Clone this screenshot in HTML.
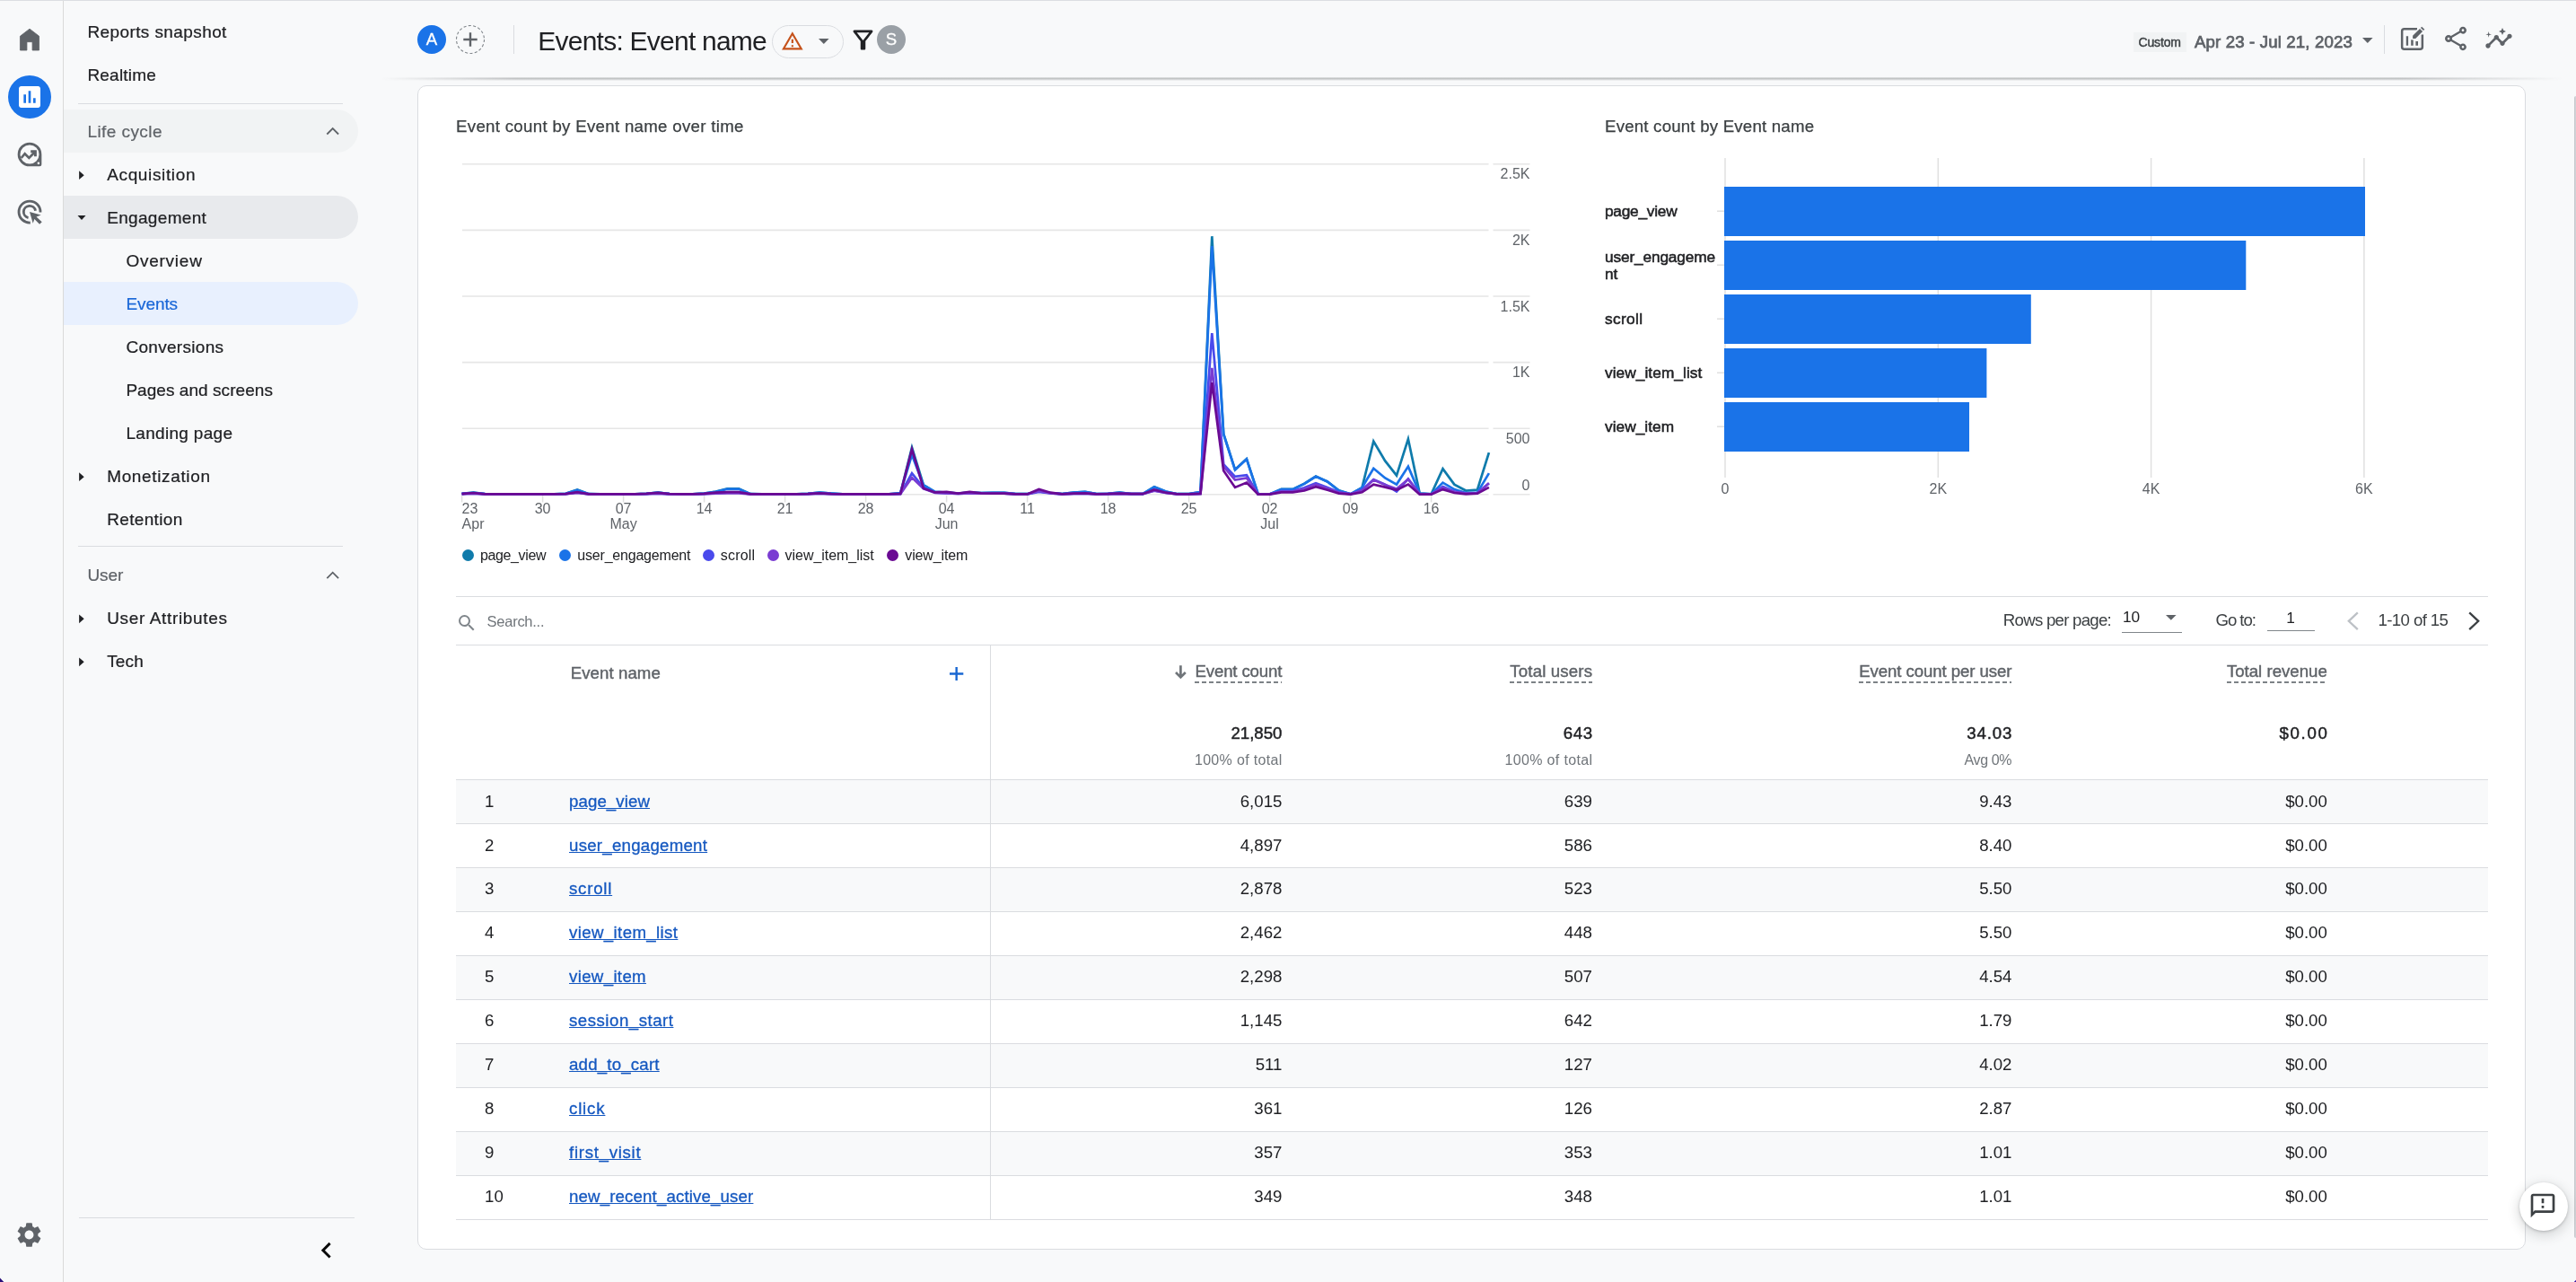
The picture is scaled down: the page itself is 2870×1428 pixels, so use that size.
<!DOCTYPE html>
<html lang="en"><head><meta charset="utf-8"><title>Events: Event name</title>
<style>
html,body{margin:0;padding:0}
body{width:2870px;height:1428px;overflow:hidden;background:#f8f9fa;font-family:"Liberation Sans", sans-serif;position:relative;color:#202124}
div,svg{box-sizing:border-box}
svg{position:absolute;overflow:visible}
a{color:#1558c0;text-decoration:underline}
#L{position:absolute;left:0;top:0;width:2870px;height:1428px;will-change:transform;overflow:hidden}
</style></head><body><div id="L">
<div style="position:absolute;left:0px;top:0px;width:2870px;height:1px;background:#dcdee2;"></div>
<div style="position:absolute;left:69.9px;top:1px;width:1.3px;height:1428px;background:#dadada;"></div>
<svg style="left:17px;top:28px" width="32" height="32" viewBox="0 0 24 24"><path d="M12 3.1L4.1 9.2V21h5.6v-7h4.6v7h5.6V9.2z" fill="#5f6368" stroke="#5f6368" stroke-width=".6" stroke-linejoin="round"/></svg>
<div style="position:absolute;left:9px;top:84px;width:48px;height:48px;border-radius:50%;background:#1a73e8"></div>
<svg style="left:17px;top:92px" width="32" height="32" viewBox="0 0 24 24"><path d="M19 3H5c-1.1 0-2 .9-2 2v14c0 1.1.9 2 2 2h14c1.1 0 2-.9 2-2V5c0-1.1-.9-2-2-2zM9 17H7v-7h2v7zm4 0h-2V7h2v10zm4 0h-2v-4h2v4z" fill="#fff"/></svg>
<svg style="left:17.35px;top:155.9px" width="32" height="32" viewBox="0 0 24 24"><path fill-rule="evenodd" fill="#5f6368" d="M12 2A10 10 0 1 0 12 22H20.4A1.600 1.600 0 0 0 22 20.400V12A10 10 0 0 0 12 2zM12 4.100a7.900 7.900 0 1 0 0 15.800a7.900 7.900 0 1 0 0-15.800z"/><path d="M5 15l3-3.600 3.500 3.500 5.300-5.300" fill="none" stroke="#5f6368" stroke-width="2" stroke-linejoin="miter"/><path d="M12.900 8.500h5v5.200h-2.200v-3h-2.800z" fill="#5f6368"/><circle cx="19.400" cy="19.400" r=".95" fill="#fff"/></svg>
<svg style="left:17.35px;top:220.1px" width="32" height="32" viewBox="0 0 24 24" fill="none" stroke="#5f6368" stroke-width="2.100"><path d="M21 12.400A9 9 0 1 0 12.600 21"/><path d="M16.900 11A5 5 0 1 0 10.900 16.900"/><path d="M12 12L21.500 14.700L17.600 16.100L22.300 20.400L20.300 22.400L16 18L14.800 21.600z" fill="#5f6368" stroke="none"/></svg>
<svg style="left:16.400px;top:1359px" width="33" height="33" viewBox="0 0 24 24"><path fill="#5f6368" d="M19.14 12.94c.04-.3.06-.61.06-.94 0-.32-.02-.64-.07-.94l2.03-1.58c.18-.14.23-.41.12-.61l-1.92-3.32c-.12-.22-.37-.29-.59-.22l-2.39.96c-.5-.38-1.03-.7-1.62-.94l-.36-2.54c-.04-.24-.24-.41-.48-.41h-3.84c-.24 0-.43.17-.47.41l-.36 2.54c-.59.24-1.13.57-1.62.94l-2.39-.96c-.22-.08-.47 0-.59.22L2.74 8.87c-.12.21-.08.47.12.61l2.03 1.58c-.05.3-.09.63-.09.94s.02.64.07.94l-2.03 1.58c-.18.14-.23.41-.12.61l1.92 3.32c.12.22.37.29.59.22l2.39-.96c.5.38 1.03.7 1.62.94l.36 2.54c.05.24.24.41.48.41h3.84c.24 0 .44-.17.47-.41l.36-2.54c.59-.24 1.13-.56 1.62-.94l2.39.96c.22.08.47 0 .59-.22l1.92-3.32c.12-.22.07-.47-.12-.61l-2.01-1.58zM12 15.6c-1.98 0-3.6-1.62-3.6-3.6s1.62-3.6 3.6-3.6 3.6 1.62 3.6 3.6-1.62 3.6-3.6 3.6z"/></svg>
<svg style="left:0;top:1420px" width="2870" height="8" viewBox="0 0 2870 8"><path d="M0 3.500L4.300 8H0z" fill="#2a0e78"/><path d="M2870 5.800L2867.800 8H2870z" fill="#3a14a0"/></svg>
<div style="position:absolute;left:71px;top:122px;width:328px;height:48px;border-radius:0 24px 24px 0;background:#f1f3f4"></div>
<div style="position:absolute;left:71px;top:218px;width:328px;height:48px;border-radius:0 24px 24px 0;background:#e8eaed"></div>
<div style="position:absolute;left:71px;top:314px;width:328px;height:48px;border-radius:0 24px 24px 0;background:#e8f0fe"></div>
<div style="position:absolute;left:87px;top:115px;width:295px;height:1px;background:#dadce0;"></div>
<div style="position:absolute;left:87px;top:608px;width:295px;height:1px;background:#dadce0;"></div>
<div style="position:absolute;left:88px;top:1356px;width:307px;height:1px;background:#dadce0;"></div>
<div style="position:absolute;top:23.00px;line-height:25px;font-size:19px;color:#202124;white-space:nowrap;letter-spacing:0.405px;-webkit-text-stroke:0.22px #202124;left:97.40px;" class="nav">Reports snapshot</div>
<div style="position:absolute;top:71.00px;line-height:25px;font-size:19px;color:#202124;white-space:nowrap;letter-spacing:0.219px;-webkit-text-stroke:0.22px #202124;left:97.40px;" class="nav">Realtime</div>
<div style="position:absolute;top:134.00px;line-height:25px;font-size:19px;color:#5f6368;white-space:nowrap;letter-spacing:0.433px;-webkit-text-stroke:0.22px #5f6368;left:97.40px;" class="nav">Life cycle</div>
<div style="position:absolute;top:182.00px;line-height:25px;font-size:19px;color:#202124;white-space:nowrap;letter-spacing:0.642px;-webkit-text-stroke:0.22px #202124;left:119.20px;" class="nav">Acquisition</div>
<div style="position:absolute;top:230.00px;line-height:25px;font-size:19px;color:#202124;white-space:nowrap;letter-spacing:0.328px;-webkit-text-stroke:0.22px #202124;left:119.20px;" class="nav">Engagement</div>
<div style="position:absolute;top:278.00px;line-height:25px;font-size:19px;color:#202124;white-space:nowrap;letter-spacing:0.76px;-webkit-text-stroke:0.22px #202124;left:140.40px;" class="nav">Overview</div>
<div style="position:absolute;top:326.00px;line-height:25px;font-size:19px;color:#1a67d8;white-space:nowrap;letter-spacing:-0.077px;-webkit-text-stroke:0.22px #1a67d8;left:140.40px;" class="nav">Events</div>
<div style="position:absolute;top:374.00px;line-height:25px;font-size:19px;color:#202124;white-space:nowrap;letter-spacing:0.3px;-webkit-text-stroke:0.22px #202124;left:140.40px;" class="nav">Conversions</div>
<div style="position:absolute;top:422.00px;line-height:25px;font-size:19px;color:#202124;white-space:nowrap;letter-spacing:0.053px;-webkit-text-stroke:0.22px #202124;left:140.40px;" class="nav">Pages and screens</div>
<div style="position:absolute;top:470.00px;line-height:25px;font-size:19px;color:#202124;white-space:nowrap;letter-spacing:0.312px;-webkit-text-stroke:0.22px #202124;left:140.40px;" class="nav">Landing page</div>
<div style="position:absolute;top:518.00px;line-height:25px;font-size:19px;color:#202124;white-space:nowrap;letter-spacing:0.643px;-webkit-text-stroke:0.22px #202124;left:119.20px;" class="nav">Monetization</div>
<div style="position:absolute;top:566.00px;line-height:25px;font-size:19px;color:#202124;white-space:nowrap;letter-spacing:0.346px;-webkit-text-stroke:0.22px #202124;left:119.20px;" class="nav">Retention</div>
<div style="position:absolute;top:628.00px;line-height:25px;font-size:19px;color:#5f6368;white-space:nowrap;letter-spacing:-0.072px;-webkit-text-stroke:0.22px #5f6368;left:97.40px;" class="nav">User</div>
<div style="position:absolute;top:676.00px;line-height:25px;font-size:19px;color:#202124;white-space:nowrap;letter-spacing:0.65px;-webkit-text-stroke:0.22px #202124;left:119.20px;" class="nav">User Attributes</div>
<div style="position:absolute;top:724.00px;line-height:25px;font-size:19px;color:#202124;white-space:nowrap;letter-spacing:0.156px;-webkit-text-stroke:0.22px #202124;left:119.20px;" class="nav">Tech</div>
<svg style="left:0;top:0" width="200" height="800" viewBox="0 0 200 800"><path d="M88.1 190.3L93.7 195.2L88.1 200.1z" fill="#202124"/></svg>
<svg style="left:0;top:0" width="200" height="800" viewBox="0 0 200 800"><path d="M86.5 239.9H95.5L91.0 245.1z" fill="#202124"/></svg>
<svg style="left:0;top:0" width="200" height="800" viewBox="0 0 200 800"><path d="M88.1 526.3L93.7 531.2L88.1 536.1z" fill="#202124"/></svg>
<svg style="left:0;top:0" width="200" height="800" viewBox="0 0 200 800"><path d="M88.1 684.4L93.7 689.3L88.1 694.2z" fill="#202124"/></svg>
<svg style="left:0;top:0" width="200" height="800" viewBox="0 0 200 800"><path d="M88.1 732.4L93.7 737.3L88.1 742.2z" fill="#202124"/></svg>
<svg style="left:0;top:0" width="400" height="800" viewBox="0 0 400 800"><path d="M364.3 149.5L370.7 143.1L377.1 149.5" fill="none" stroke="#5f6368" stroke-width="1.800"/></svg>
<svg style="left:0;top:0" width="400" height="800" viewBox="0 0 400 800"><path d="M364.3 644.1L370.7 637.7L377.1 644.1" fill="none" stroke="#5f6368" stroke-width="1.800"/></svg>
<svg style="left:346.400px;top:1374.500px" width="35.300" height="35.300" viewBox="0 0 24 24"><path d="M15.41 7.41L14 6l-6 6 6 6 1.41-1.41L10.83 12z" fill="#0a0a0a"/></svg>
<div style="position:absolute;left:425px;top:86px;width:2430px;height:4px;background:linear-gradient(to bottom,rgba(60,64,67,.10),rgba(60,64,67,.30) 40%,rgba(60,64,67,0));-webkit-mask-image:linear-gradient(to right,transparent,#000 150px,#000 2250px,transparent);mask-image:linear-gradient(to right,transparent,#000 150px,#000 2250px,transparent)"></div>
<div style="position:absolute;left:465px;top:28px;width:32px;height:32px;border-radius:50%;background:#1a73e8"></div>
<div style="position:absolute;top:32.30px;line-height:24px;font-size:18.67px;color:#fff;white-space:nowrap;-webkit-text-stroke:0.3px #fff;left:-19.00px;width:1000px;text-align:center;">A</div>
<svg style="left:506.600px;top:26.700px" width="34" height="34" viewBox="0 0 34 34"><circle cx="17" cy="17" r="15.500" fill="none" stroke="#80868b" stroke-width="1.100" stroke-dasharray="3.100 2.310"/><path d="M17 9.300v15.400M9.300 17h15.400" stroke="#5f6368" stroke-width="2.400" fill="none"/></svg>
<div style="position:absolute;left:572px;top:28px;width:1px;height:32px;background:#dadce0;"></div>
<div style="position:absolute;top:25.90px;line-height:39px;font-size:30px;color:#202124;white-space:nowrap;letter-spacing:-0.764px;left:599.30px;" class="title">Events: Event name</div>
<div style="position:absolute;left:860px;top:28px;width:80px;height:37px;border-radius:19px;border:1px solid #dadce0"></div>
<svg style="left:870px;top:33.2px" width="25.7" height="25.7" viewBox="0 0 24 24"><path d="M12 5.99L19.53 19H4.47L12 5.99M12 2L1 21h22L12 2zm1 14h-2v2h2v-2zm0-6h-2v4h2v-4z" fill="#c5521b"/></svg>
<svg style="left:912.400px;top:43.300px" width="11.6" height="6" viewBox="0 0 10 5"><path d="M0 0l5 5 5-5z" fill="#5f6368"/></svg>
<svg style="left:944.5px;top:27.7px" width="33" height="33" viewBox="0 0 24 24"><path d="M7 6h10l-5.01 6.3L7 6zm-2.75-.39C6.27 8.2 10 13 10 13v6c0 .55.45 1 1 1h2c.55 0 1-.45 1-1v-6s3.72-4.8 5.74-7.39c.51-.66.04-1.61-.79-1.61H5.04c-.83 0-1.3.95-.79 1.61z" fill="#202124"/></svg>
<div style="position:absolute;left:977px;top:28px;width:32px;height:32px;border-radius:50%;background:#9aa0a6"></div>
<div style="position:absolute;top:32.30px;line-height:24px;font-size:18.67px;color:#fff;white-space:nowrap;-webkit-text-stroke:0.3px #fff;left:493.00px;width:1000px;text-align:center;">S</div>
<div style="position:absolute;left:2377px;top:36px;width:59px;height:22px;background:#f1f3f4;"></div>
<div style="position:absolute;top:38.00px;line-height:18px;font-size:14px;color:#3c4043;white-space:nowrap;letter-spacing:-0.148px;-webkit-text-stroke:0.45px #3c4043;left:2382.50px;" class="custom">Custom</div>
<div style="position:absolute;top:34.50px;line-height:24px;font-size:18.67px;color:#5f6368;white-space:nowrap;letter-spacing:0.134px;-webkit-text-stroke:0.75px #5f6368;left:2445.00px;" class="date">Apr 23 - Jul 21, 2023</div>
<svg style="left:2632px;top:42px" width="11.6" height="6" viewBox="0 0 10 5"><path d="M0 0l5 5 5-5z" fill="#5f6368"/></svg>
<div style="position:absolute;left:2656px;top:28px;width:1px;height:32px;background:#dadce0;"></div>
<svg style="left:2670px;top:26px" width="36" height="36" viewBox="0 0 36 36"><path d="M23 6.150H8.650a2.500 2.500 0 0 0-2.500 2.500V26.250a2.500 2.500 0 0 0 2.500 2.500H26.350a2.500 2.500 0 0 0 2.500-2.500V12.500" fill="none" stroke="#5f6368" stroke-width="2.500"/><path d="M10.800 14.200h2.300v10.500h-2.300zM16.200 18.200h2.500v6.500h-2.500zM21.400 20.100h2.600v4.600h-2.600z" fill="#5f6368"/><path d="M18.100 16.900V13.800L26 5.900L29.100 9L21.200 16.900z" fill="#5f6368" stroke="#f8f9fa" stroke-width="2.600" paint-order="stroke"/><path d="M26.900 5L28.200 3.700L31.300 6.800L30 8.100z" fill="#5f6368"/></svg>
<svg style="left:2720px;top:27px" width="32" height="32" viewBox="0 0 24 24"><path fill="#5f6368" d="M18 16.08c-.76 0-1.44.3-1.96.77L8.910 12.7c.05-.23.09-.46.09-.7s-.04-.47-.09-.7l7.05-4.11c.54.5 1.250.81 2.040.81 1.660 0 3-1.340 3-3s-1.340-3-3-3-3 1.340-3 3c0 .24.04.47.09.7L8.040 9.810C7.5 9.310 6.790 9 6 9c-1.660 0-3 1.340-3 3s1.340 3 3 3c.79 0 1.5-.31 2.040-.81l7.120 4.160c-.05.21-.08.43-.08.65 0 1.610 1.310 2.920 2.920 2.920s2.920-1.310 2.920-2.920c0-1.610-1.310-2.920-2.920-2.920zM18 4c.55 0 1 .45 1 1s-.45 1-1 1-1-.45-1-1 .45-1 1-1zM6 13c-.55 0-1-.45-1-1s.45-1 1-1 1 .45 1 1-.45 1-1 1zm12 7.020c-.55 0-1-.45-1-1s.45-1 1-1 1 .45 1 1-.45 1-1 1z"/></svg>
<svg style="left:2768px;top:27.2px" width="32" height="32" viewBox="0 0 24 24"><path fill="#5f6368" d="M21 8c-1.45 0-2.26 1.44-1.93 2.51l-3.55 3.56c-.3-.09-.74-.09-1.04 0l-2.55-2.55C12.27 10.45 11.46 9 10 9c-1.45 0-2.27 1.44-1.93 2.52l-4.56 4.55C2.44 15.74 1 16.55 1 18c0 1.1.9 2 2 2 1.45 0 2.26-1.44 1.93-2.51l4.55-4.56c.3.09.74.09 1.04 0l2.55 2.55C12.73 16.55 13.54 18 15 18c1.45 0 2.27-1.44 1.93-2.52l3.56-3.55c1.07.33 2.51-.48 2.51-1.93 0-1.1-.9-2-2-2z"/><path fill="#5f6368" d="M15 9l.94-2.07L18 6l-2.06-.93L15 3l-.92 2.07L12 6l2.08.93zM3.5 11L4 9l2-.5L4 8l-.5-2L3 8l-2 .5L3 9z"/></svg>
<div style="position:absolute;left:465px;top:95px;width:2349px;height:1297px;background:#fff;border:1px solid #dadce0;border-radius:10px"></div>
<div style="position:absolute;top:129.00px;line-height:24px;font-size:18.67px;color:#3c4043;white-space:nowrap;letter-spacing:0.306px;-webkit-text-stroke:0.25px #3c4043;left:508.00px;" class="ct1">Event count by Event name over time</div>
<div style="position:absolute;top:129.00px;line-height:24px;font-size:18.67px;color:#3c4043;white-space:nowrap;letter-spacing:0.203px;-webkit-text-stroke:0.25px #3c4043;left:1788.00px;" class="ct2">Event count by Event name</div>
<svg style="left:0;top:0" width="2870" height="700" viewBox="0 0 2870 700">
<path d="M515 550.8H1658.5M1663.5 550.8H1704.5" stroke="#e6e6e6" stroke-width="1.6" fill="none"/>
<path d="M515 477.2H1658.5M1663.5 477.2H1704.5" stroke="#e6e6e6" stroke-width="1.6" fill="none"/>
<path d="M515 403.6H1658.5M1663.5 403.6H1704.5" stroke="#e6e6e6" stroke-width="1.6" fill="none"/>
<path d="M515 330.0H1658.5M1663.5 330.0H1704.5" stroke="#e6e6e6" stroke-width="1.6" fill="none"/>
<path d="M515 256.4H1658.5M1663.5 256.4H1704.5" stroke="#e6e6e6" stroke-width="1.6" fill="none"/>
<path d="M515 182.8H1658.5M1663.5 182.8H1704.5" stroke="#e6e6e6" stroke-width="1.6" fill="none"/>
<path d="M514.6 552V559.5" stroke="#e0e0e0" stroke-width="1.5"/>
<path d="M604.6 552V559.5" stroke="#e0e0e0" stroke-width="1.5"/>
<path d="M694.6 552V559.5" stroke="#e0e0e0" stroke-width="1.5"/>
<path d="M784.6 552V559.5" stroke="#e0e0e0" stroke-width="1.5"/>
<path d="M874.6 552V559.5" stroke="#e0e0e0" stroke-width="1.5"/>
<path d="M964.6 552V559.5" stroke="#e0e0e0" stroke-width="1.5"/>
<path d="M1054.6 552V559.5" stroke="#e0e0e0" stroke-width="1.5"/>
<path d="M1144.6 552V559.5" stroke="#e0e0e0" stroke-width="1.5"/>
<path d="M1234.6 552V559.5" stroke="#e0e0e0" stroke-width="1.5"/>
<path d="M1324.6 552V559.5" stroke="#e0e0e0" stroke-width="1.5"/>
<path d="M1414.6 552V559.5" stroke="#e0e0e0" stroke-width="1.5"/>
<path d="M1504.6 552V559.5" stroke="#e0e0e0" stroke-width="1.5"/>
<path d="M1594.6 552V559.5" stroke="#e0e0e0" stroke-width="1.5"/>
<polyline points="514.6,549.9 527.5,548.7 540.3,550.2 553.2,550.4 566.0,550.4 578.9,550.4 591.7,550.4 604.6,550.4 617.5,550.4 630.3,549.9 643.2,545.5 656.0,550.2 668.9,550.4 681.7,550.4 694.6,550.4 707.5,550.4 720.3,549.9 733.2,548.7 746.0,550.1 758.9,550.4 771.7,550.4 784.6,549.6 797.5,547.6 810.3,544.3 823.2,544.3 836.0,550.2 848.9,550.4 861.7,550.4 874.6,550.4 887.5,550.4 900.3,549.9 913.2,548.6 926.0,549.6 938.9,550.4 951.7,550.4 964.6,550.4 977.5,550.4 990.3,550.4 1003.2,549.6 1016.0,498.4 1028.9,540.2 1041.7,547.9 1054.6,548.7 1067.5,549.6 1080.3,548.7 1093.2,549.0 1106.0,548.9 1118.9,548.9 1131.7,550.2 1144.6,550.2 1157.5,547.0 1170.3,549.0 1183.2,550.2 1196.0,548.6 1208.9,547.9 1221.7,550.2 1234.6,549.9 1247.5,548.6 1260.3,550.1 1273.2,550.1 1286.0,542.3 1298.9,547.6 1311.7,550.2 1324.6,550.1 1337.5,548.2 1350.3,263.2 1363.2,483.1 1376.0,523.1 1388.9,511.1 1401.7,550.4 1414.6,550.4 1427.5,544.9 1440.3,544.9 1453.2,538.7 1466.0,530.5 1478.9,536.4 1491.7,546.4 1504.6,550.4 1517.5,543.1 1530.3,491.6 1543.2,513.4 1556.0,529.6 1568.9,489.0 1581.7,549.6 1594.6,550.4 1607.5,522.1 1620.3,539.6 1633.2,546.5 1646.0,545.5 1658.9,504.1" fill="none" stroke="#0f7bab" stroke-width="2.7" stroke-linejoin="miter" stroke-miterlimit="6"/>
<polyline points="514.6,549.9 527.5,548.9 540.3,550.2 553.2,550.4 566.0,550.4 578.9,550.4 591.7,550.4 604.6,550.4 617.5,550.4 630.3,549.9 643.2,545.8 656.0,550.2 668.9,550.4 681.7,550.4 694.6,550.4 707.5,550.4 720.3,549.9 733.2,548.7 746.0,550.1 758.9,550.4 771.7,550.4 784.6,549.6 797.5,547.9 810.3,544.8 823.2,544.8 836.0,550.2 848.9,550.4 861.7,550.4 874.6,550.4 887.5,550.4 900.3,549.9 913.2,548.7 926.0,549.6 938.9,550.4 951.7,550.4 964.6,550.4 977.5,550.4 990.3,550.4 1003.2,549.0 1016.0,506.6 1028.9,540.5 1041.7,547.9 1054.6,548.7 1067.5,549.6 1080.3,548.7 1093.2,549.0 1106.0,548.9 1118.9,548.9 1131.7,550.2 1144.6,550.2 1157.5,547.3 1170.3,549.0 1183.2,550.2 1196.0,548.6 1208.9,547.9 1221.7,550.2 1234.6,549.9 1247.5,548.6 1260.3,550.1 1273.2,550.1 1286.0,542.6 1298.9,547.6 1311.7,550.2 1324.6,550.1 1337.5,548.2 1350.3,274.1 1363.2,483.7 1376.0,523.4 1388.9,511.4 1401.7,550.4 1414.6,550.4 1427.5,545.1 1440.3,545.1 1453.2,538.9 1466.0,530.8 1478.9,536.5 1491.7,546.5 1504.6,550.4 1517.5,543.3 1530.3,521.7 1543.2,532.5 1556.0,539.6 1568.9,519.6 1581.7,549.6 1594.6,550.4 1607.5,537.6 1620.3,545.1 1633.2,549.0 1646.0,548.6 1658.9,527.1" fill="none" stroke="#1a73e8" stroke-width="2.7" stroke-linejoin="miter" stroke-miterlimit="6"/>
<polyline points="514.6,550.2 527.5,549.6 540.3,550.4 553.2,550.4 566.0,550.4 578.9,550.4 591.7,550.4 604.6,550.4 617.5,550.4 630.3,550.2 643.2,548.7 656.0,550.4 668.9,550.4 681.7,550.4 694.6,550.4 707.5,550.4 720.3,550.2 733.2,549.6 746.0,550.4 758.9,550.4 771.7,550.4 784.6,550.2 797.5,549.3 810.3,548.7 823.2,548.7 836.0,550.4 848.9,550.4 861.7,550.4 874.6,550.4 887.5,550.4 900.3,550.2 913.2,549.6 926.0,550.2 938.9,550.4 951.7,550.4 964.6,550.4 977.5,550.4 990.3,550.4 1003.2,550.1 1016.0,527.2 1028.9,543.4 1041.7,548.7 1054.6,549.3 1067.5,549.9 1080.3,549.3 1093.2,549.6 1106.0,549.6 1118.9,549.6 1131.7,550.4 1144.6,550.4 1157.5,547.9 1170.3,549.3 1183.2,550.4 1196.0,549.9 1208.9,549.6 1221.7,550.4 1234.6,550.2 1247.5,549.9 1260.3,550.2 1273.2,550.2 1286.0,546.4 1298.9,549.0 1311.7,550.4 1324.6,550.4 1337.5,549.9 1350.3,371.2 1363.2,517.1 1376.0,530.8 1388.9,529.2 1401.7,550.4 1414.6,550.4 1427.5,547.1 1440.3,547.1 1453.2,543.3 1466.0,538.3 1478.9,542.9 1491.7,548.3 1504.6,550.4 1517.5,545.8 1530.3,534.0 1543.2,539.6 1556.0,547.6 1568.9,533.3 1581.7,550.2 1594.6,550.4 1607.5,542.1 1620.3,547.6 1633.2,549.6 1646.0,549.0 1658.9,538.3" fill="none" stroke="#4a4aec" stroke-width="2.7" stroke-linejoin="miter" stroke-miterlimit="6"/>
<polyline points="514.6,550.2 527.5,549.6 540.3,550.4 553.2,550.4 566.0,550.4 578.9,550.4 591.7,550.4 604.6,550.4 617.5,550.4 630.3,550.2 643.2,549.0 656.0,550.4 668.9,550.4 681.7,550.4 694.6,550.4 707.5,550.4 720.3,550.2 733.2,549.6 746.0,550.4 758.9,550.4 771.7,550.4 784.6,550.2 797.5,549.6 810.3,549.3 823.2,549.3 836.0,550.4 848.9,550.4 861.7,550.4 874.6,550.4 887.5,550.4 900.3,550.2 913.2,549.6 926.0,550.2 938.9,550.4 951.7,550.4 964.6,550.4 977.5,550.4 990.3,550.4 1003.2,550.1 1016.0,532.0 1028.9,544.3 1041.7,549.0 1054.6,549.3 1067.5,549.9 1080.3,549.3 1093.2,549.6 1106.0,549.6 1118.9,549.6 1131.7,550.4 1144.6,550.4 1157.5,547.0 1170.3,549.3 1183.2,550.4 1196.0,549.9 1208.9,549.6 1221.7,550.4 1234.6,550.2 1247.5,549.9 1260.3,550.2 1273.2,550.2 1286.0,546.7 1298.9,549.0 1311.7,550.4 1324.6,550.4 1337.5,549.9 1350.3,409.8 1363.2,519.6 1376.0,534.6 1388.9,532.5 1401.7,550.4 1414.6,550.4 1427.5,547.6 1440.3,547.6 1453.2,544.6 1466.0,539.6 1478.9,544.0 1491.7,548.7 1504.6,550.4 1517.5,546.4 1530.3,534.6 1543.2,540.1 1556.0,544.6 1568.9,534.0 1581.7,550.2 1594.6,550.4 1607.5,543.3 1620.3,547.9 1633.2,549.6 1646.0,549.3 1658.9,538.3" fill="none" stroke="#7a3cd2" stroke-width="2.7" stroke-linejoin="miter" stroke-miterlimit="6"/>
<polyline points="514.6,550.1 527.5,549.0 540.3,550.4 553.2,550.4 566.0,550.4 578.9,550.4 591.7,550.4 604.6,550.4 617.5,550.4 630.3,550.1 643.2,548.2 656.0,550.4 668.9,550.4 681.7,550.4 694.6,550.4 707.5,550.4 720.3,549.9 733.2,548.9 746.0,550.2 758.9,550.4 771.7,550.4 784.6,549.9 797.5,548.7 810.3,548.2 823.2,548.2 836.0,550.4 848.9,550.4 861.7,550.4 874.6,550.4 887.5,550.4 900.3,550.1 913.2,549.3 926.0,550.1 938.9,550.4 951.7,550.4 964.6,550.4 977.5,550.4 990.3,550.4 1003.2,549.9 1016.0,500.5 1028.9,543.9 1041.7,548.4 1054.6,547.9 1067.5,549.6 1080.3,547.9 1093.2,549.3 1106.0,549.6 1118.9,549.6 1131.7,550.4 1144.6,550.4 1157.5,544.9 1170.3,548.7 1183.2,550.4 1196.0,549.6 1208.9,549.3 1221.7,550.4 1234.6,550.2 1247.5,549.6 1260.3,550.2 1273.2,550.2 1286.0,545.5 1298.9,548.7 1311.7,550.4 1324.6,550.4 1337.5,549.9 1350.3,426.1 1363.2,524.2 1376.0,542.9 1388.9,537.6 1401.7,550.7 1414.6,550.7 1427.5,548.3 1440.3,548.3 1453.2,546.5 1466.0,542.1 1478.9,545.8 1491.7,549.6 1504.6,550.7 1517.5,548.3 1530.3,539.6 1543.2,542.6 1556.0,545.8 1568.9,539.6 1581.7,550.7 1594.6,550.7 1607.5,545.1 1620.3,549.0 1633.2,550.4 1646.0,549.6 1658.9,542.9" fill="none" stroke="#6a0a93" stroke-width="2.7" stroke-linejoin="miter" stroke-miterlimit="6"/>
</svg>
<div style="position:absolute;top:529.80px;line-height:21px;font-size:16px;color:#5f6368;white-space:nowrap;right:1165.50px;" class="yl">0</div>
<div style="position:absolute;top:477.70px;line-height:21px;font-size:16px;color:#5f6368;white-space:nowrap;right:1165.50px;" class="yl">500</div>
<div style="position:absolute;top:404.10px;line-height:21px;font-size:16px;color:#5f6368;white-space:nowrap;right:1165.50px;" class="yl">1K</div>
<div style="position:absolute;top:330.50px;line-height:21px;font-size:16px;color:#5f6368;white-space:nowrap;right:1165.50px;" class="yl">1.5K</div>
<div style="position:absolute;top:256.90px;line-height:21px;font-size:16px;color:#5f6368;white-space:nowrap;right:1165.50px;" class="yl">2K</div>
<div style="position:absolute;top:183.30px;line-height:21px;font-size:16px;color:#5f6368;white-space:nowrap;right:1165.50px;" class="yl">2.5K</div>
<div style="position:absolute;top:555.90px;line-height:21px;font-size:16px;color:#5f6368;white-space:nowrap;left:514.60px;" class="xl">23</div>
<div style="position:absolute;top:572.50px;line-height:21px;font-size:16px;color:#5f6368;white-space:nowrap;left:514.60px;" class="xl">Apr</div>
<div style="position:absolute;top:555.90px;line-height:21px;font-size:16px;color:#5f6368;white-space:nowrap;left:104.60px;width:1000px;text-align:center;" class="xl">30</div>
<div style="position:absolute;top:555.90px;line-height:21px;font-size:16px;color:#5f6368;white-space:nowrap;left:194.60px;width:1000px;text-align:center;" class="xl">07</div>
<div style="position:absolute;top:572.50px;line-height:21px;font-size:16px;color:#5f6368;white-space:nowrap;left:194.60px;width:1000px;text-align:center;" class="xl">May</div>
<div style="position:absolute;top:555.90px;line-height:21px;font-size:16px;color:#5f6368;white-space:nowrap;left:284.60px;width:1000px;text-align:center;" class="xl">14</div>
<div style="position:absolute;top:555.90px;line-height:21px;font-size:16px;color:#5f6368;white-space:nowrap;left:374.60px;width:1000px;text-align:center;" class="xl">21</div>
<div style="position:absolute;top:555.90px;line-height:21px;font-size:16px;color:#5f6368;white-space:nowrap;left:464.60px;width:1000px;text-align:center;" class="xl">28</div>
<div style="position:absolute;top:555.90px;line-height:21px;font-size:16px;color:#5f6368;white-space:nowrap;left:554.60px;width:1000px;text-align:center;" class="xl">04</div>
<div style="position:absolute;top:572.50px;line-height:21px;font-size:16px;color:#5f6368;white-space:nowrap;left:554.60px;width:1000px;text-align:center;" class="xl">Jun</div>
<div style="position:absolute;top:555.90px;line-height:21px;font-size:16px;color:#5f6368;white-space:nowrap;left:644.60px;width:1000px;text-align:center;" class="xl">11</div>
<div style="position:absolute;top:555.90px;line-height:21px;font-size:16px;color:#5f6368;white-space:nowrap;left:734.60px;width:1000px;text-align:center;" class="xl">18</div>
<div style="position:absolute;top:555.90px;line-height:21px;font-size:16px;color:#5f6368;white-space:nowrap;left:824.60px;width:1000px;text-align:center;" class="xl">25</div>
<div style="position:absolute;top:555.90px;line-height:21px;font-size:16px;color:#5f6368;white-space:nowrap;left:914.60px;width:1000px;text-align:center;" class="xl">02</div>
<div style="position:absolute;top:572.50px;line-height:21px;font-size:16px;color:#5f6368;white-space:nowrap;left:914.60px;width:1000px;text-align:center;" class="xl">Jul</div>
<div style="position:absolute;top:555.90px;line-height:21px;font-size:16px;color:#5f6368;white-space:nowrap;left:1004.60px;width:1000px;text-align:center;" class="xl">09</div>
<div style="position:absolute;top:555.90px;line-height:21px;font-size:16px;color:#5f6368;white-space:nowrap;left:1094.60px;width:1000px;text-align:center;" class="xl">16</div>
<div style="position:absolute;left:514.65px;top:611.95px;width:13.5px;height:13.5px;border-radius:50%;background:#0f7bab"></div>
<div style="position:absolute;top:608.20px;line-height:21px;font-size:16px;color:#202124;white-space:nowrap;letter-spacing:-0.375px;left:535.00px;" class="leg">page_view</div>
<div style="position:absolute;left:622.55px;top:611.95px;width:13.5px;height:13.5px;border-radius:50%;background:#1a73e8"></div>
<div style="position:absolute;top:608.20px;line-height:21px;font-size:16px;color:#202124;white-space:nowrap;letter-spacing:-0.199px;left:643.30px;" class="leg">user_engagement</div>
<div style="position:absolute;left:782.55px;top:611.95px;width:13.5px;height:13.5px;border-radius:50%;background:#4a4aec"></div>
<div style="position:absolute;top:608.20px;line-height:21px;font-size:16px;color:#202124;white-space:nowrap;letter-spacing:0.173px;left:802.80px;" class="leg">scroll</div>
<div style="position:absolute;left:854.55px;top:611.95px;width:13.5px;height:13.5px;border-radius:50%;background:#7a3cd2"></div>
<div style="position:absolute;top:608.20px;line-height:21px;font-size:16px;color:#202124;white-space:nowrap;letter-spacing:-0.045px;left:874.60px;" class="leg">view_item_list</div>
<div style="position:absolute;left:987.55px;top:611.95px;width:13.5px;height:13.5px;border-radius:50%;background:#6a0a93"></div>
<div style="position:absolute;top:608.20px;line-height:21px;font-size:16px;color:#202124;white-space:nowrap;letter-spacing:-0.129px;left:1008.30px;" class="leg">view_item</div>
<svg style="left:0;top:0" width="2870" height="700" viewBox="0 0 2870 700">
<path d="M1922.0 176V532" stroke="#e0e0e0" stroke-width="1.5"/>
<path d="M2159.3 176V532" stroke="#e0e0e0" stroke-width="1.5"/>
<path d="M2396.6 176V532" stroke="#e0e0e0" stroke-width="1.5"/>
<path d="M2633.9 176V532" stroke="#e0e0e0" stroke-width="1.5"/>
<rect x="1921" y="208" width="714.0" height="55" fill="#1a73e8"/>
<path d="M1913 235.2H1921" stroke="#e0e0e0" stroke-width="1.5"/>
<rect x="1921" y="268" width="581.3" height="55" fill="#1a73e8"/>
<path d="M1913 295.2H1921" stroke="#e0e0e0" stroke-width="1.5"/>
<rect x="1921" y="328" width="341.8" height="55" fill="#1a73e8"/>
<path d="M1913 355.2H1921" stroke="#e0e0e0" stroke-width="1.5"/>
<rect x="1921" y="388" width="292.4" height="55" fill="#1a73e8"/>
<path d="M1913 415.2H1921" stroke="#e0e0e0" stroke-width="1.5"/>
<rect x="1921" y="448" width="273.0" height="55" fill="#1a73e8"/>
<path d="M1913 475.2H1921" stroke="#e0e0e0" stroke-width="1.5"/>
</svg>
<div style="position:absolute;top:533.50px;line-height:21px;font-size:16px;color:#5f6368;white-space:nowrap;left:1422.00px;width:1000px;text-align:center;" class="bl">0</div>
<div style="position:absolute;top:533.50px;line-height:21px;font-size:16px;color:#5f6368;white-space:nowrap;left:1659.30px;width:1000px;text-align:center;" class="bl">2K</div>
<div style="position:absolute;top:533.50px;line-height:21px;font-size:16px;color:#5f6368;white-space:nowrap;left:1896.60px;width:1000px;text-align:center;" class="bl">4K</div>
<div style="position:absolute;top:533.50px;line-height:21px;font-size:16px;color:#5f6368;white-space:nowrap;left:2133.90px;width:1000px;text-align:center;" class="bl">6K</div>
<div style="position:absolute;top:224.20px;line-height:22px;font-size:17.3px;color:#202124;white-space:nowrap;letter-spacing:-0.252px;-webkit-text-stroke:0.5px #202124;left:1788.00px;" class="bn">page_view</div>
<div style="position:absolute;top:286.70px;line-height:19px;font-size:17.3px;color:#202124;white-space:nowrap;letter-spacing:-0.153px;-webkit-text-stroke:0.5px #202124;left:1788.00px;top:277.2px;" class="bn">user_engageme<br>nt</div>
<div style="position:absolute;top:344.20px;line-height:22px;font-size:17.3px;color:#202124;white-space:nowrap;letter-spacing:0.346px;-webkit-text-stroke:0.5px #202124;left:1788.00px;" class="bn">scroll</div>
<div style="position:absolute;top:404.20px;line-height:22px;font-size:17.3px;color:#202124;white-space:nowrap;letter-spacing:0.056px;-webkit-text-stroke:0.5px #202124;left:1788.00px;" class="bn">view_item_list</div>
<div style="position:absolute;top:464.20px;line-height:22px;font-size:17.3px;color:#202124;white-space:nowrap;letter-spacing:0.036px;-webkit-text-stroke:0.5px #202124;left:1788.00px;" class="bn">view_item</div>
<div style="position:absolute;left:508px;top:664px;width:2264px;height:1px;background:#dadce0;"></div>
<div style="position:absolute;left:508px;top:718px;width:2264px;height:1px;background:#dadce0;"></div>
<svg style="left:507.800px;top:682px" width="24" height="24" viewBox="0 0 24 24"><path fill="#80868b" d="M15.5 14h-.79l-.28-.27A6.471 6.471 0 0 0 16 9.5 6.5 6.5 0 1 0 9.500 16c1.610 0 3.090-.59 4.230-1.570l.27.28v.79l5 4.990L20.490 19l-4.990-5zm-6 0C7.010 14 5 11.990 5 9.500S7.010 5 9.500 5 14 7.010 14 9.500 11.990 14 9.500 14z"/></svg>
<div style="position:absolute;top:682.00px;line-height:21px;font-size:16.5px;color:#70757a;white-space:nowrap;letter-spacing:-0.266px;left:542.60px;" class="srch">Search...</div>
<div style="position:absolute;top:679.00px;line-height:24px;font-size:18.67px;color:#3c4043;white-space:nowrap;letter-spacing:-0.743px;left:2231.80px;" class="rpp">Rows per page:</div>
<div style="position:absolute;top:676.40px;line-height:22px;font-size:17.3px;color:#202124;white-space:nowrap;left:2365.00px;" class="p10">10</div>
<svg style="left:2413px;top:685px" width="11.6" height="5.8" viewBox="0 0 10 5"><path d="M0 0l5 5 5-5z" fill="#5f6368"/></svg>
<div style="position:absolute;left:2364px;top:703.7px;width:66.6px;height:1.2px;background:#80868b;"></div>
<div style="position:absolute;top:679.00px;line-height:24px;font-size:18.67px;color:#3c4043;white-space:nowrap;letter-spacing:-1.07px;left:2468.50px;" class="goto">Go to:</div>
<div style="position:absolute;top:677.40px;line-height:22px;font-size:17.3px;color:#202124;white-space:nowrap;left:2052.00px;width:1000px;text-align:center;">1</div>
<div style="position:absolute;left:2526px;top:701.5px;width:53px;height:1.2px;background:#80868b;"></div>
<svg style="left:2600px;top:670px" width="180" height="44" viewBox="0 0 180 44" fill="none" stroke-width="2.300"><path d="M26.800 12.400L16.800 21.800L26.800 31.200" stroke="#bdc1c6"/><path d="M151.200 12.400L161.200 21.800L151.200 31.200" stroke="#3c4043"/></svg>
<div style="position:absolute;top:679.00px;line-height:24px;font-size:18.67px;color:#3c4043;white-space:nowrap;letter-spacing:-0.62px;left:2649.50px;" class="pof">1-10 of 15</div>
<div style="position:absolute;left:1103px;top:718px;width:1px;height:641px;background:#dadce0;"></div>
<div style="position:absolute;top:738.30px;line-height:24px;font-size:18.67px;color:#5f6368;white-space:nowrap;letter-spacing:0.063px;-webkit-text-stroke:0.4px #5f6368;left:635.70px;" class="h0">Event name</div>
<svg style="left:1058px;top:742.8px" width="15.3" height="15" viewBox="0 0 15.3 15"><path d="M7.65 0v15M0 7.5h15.3" stroke="#1967d2" stroke-width="2.4" fill="none"/></svg>
<svg style="left:1308.6px;top:741.3px" width="12.8" height="15.2" viewBox="0 0 12.8 15.2"><path d="M6.4 0.3V13.2M1 8l5.4 5.4L11.800 8" stroke="#70757a" stroke-width="2.700" fill="none"/></svg>
<div style="position:absolute;top:736.00px;line-height:24px;font-size:18.67px;color:#5f6368;white-space:nowrap;letter-spacing:-0.16px;-webkit-text-stroke:0.4px #5f6368;right:1441.76px;background:linear-gradient(to right,#7d8287 5.400px,transparent 5.400px) 0 100%/8px 2px repeat-x;padding-bottom:1px;" class="hd">Event count</div>
<div style="position:absolute;top:736.00px;line-height:24px;font-size:18.67px;color:#5f6368;white-space:nowrap;letter-spacing:0.142px;-webkit-text-stroke:0.4px #5f6368;right:1095.86px;background:linear-gradient(to right,#7d8287 5.400px,transparent 5.400px) 0 100%/8px 2px repeat-x;padding-bottom:1px;" class="hd">Total users</div>
<div style="position:absolute;top:736.00px;line-height:24px;font-size:18.67px;color:#5f6368;white-space:nowrap;letter-spacing:-0.094px;-webkit-text-stroke:0.4px #5f6368;right:628.59px;background:linear-gradient(to right,#7d8287 5.400px,transparent 5.400px) 0 100%/8px 2px repeat-x;padding-bottom:1px;" class="hd">Event count per user</div>
<div style="position:absolute;top:736.00px;line-height:24px;font-size:18.67px;color:#5f6368;white-space:nowrap;letter-spacing:-0.007px;-webkit-text-stroke:0.4px #5f6368;right:277.21px;background:linear-gradient(to right,#7d8287 5.400px,transparent 5.400px) 0 100%/8px 2px repeat-x;padding-bottom:1px;" class="hd">Total revenue</div>
<div style="position:absolute;top:805.00px;line-height:24px;font-size:18.67px;color:#202124;white-space:nowrap;letter-spacing:-0.02px;-webkit-text-stroke:0.45px #202124;right:1441.62px;" class="tot">21,850</div>
<div style="position:absolute;top:836.10px;line-height:21px;font-size:16px;color:#70757a;white-space:nowrap;letter-spacing:0.342px;right:1441.26px;" class="sub">100% of total</div>
<div style="position:absolute;top:805.00px;line-height:24px;font-size:18.67px;color:#202124;white-space:nowrap;letter-spacing:0.626px;-webkit-text-stroke:0.45px #202124;right:1095.37px;" class="tot">643</div>
<div style="position:absolute;top:836.10px;line-height:21px;font-size:16px;color:#70757a;white-space:nowrap;letter-spacing:0.342px;right:1095.66px;" class="sub">100% of total</div>
<div style="position:absolute;top:805.00px;line-height:24px;font-size:18.67px;color:#202124;white-space:nowrap;letter-spacing:0.87px;-webkit-text-stroke:0.45px #202124;right:627.63px;" class="tot">34.03</div>
<div style="position:absolute;top:836.10px;line-height:21px;font-size:16px;color:#70757a;white-space:nowrap;letter-spacing:-0.39px;right:628.89px;" class="sub">Avg 0%</div>
<div style="position:absolute;top:805.00px;line-height:24px;font-size:18.67px;color:#202124;white-space:nowrap;letter-spacing:1.67px;-webkit-text-stroke:0.45px #202124;right:275.53px;" class="tot">$0.00</div>
<div style="position:absolute;left:508px;top:868px;width:2264px;height:49px;background:#f8f9fa;"></div>
<div style="position:absolute;left:508px;top:868px;width:2264px;height:1px;background:#dadce0;"></div>
<div style="position:absolute;top:880.70px;line-height:24px;font-size:18.67px;color:#202124;white-space:nowrap;left:540.00px;" class="num">1</div>
<div style="position:absolute;top:880.70px;line-height:24px;font-size:18.67px;color:#1558c0;white-space:nowrap;letter-spacing:0.092px;-webkit-text-stroke:0.3px #1558c0;left:634.00px;" class="lnk"><a>page_view</a></div>
<div style="position:absolute;top:880.70px;line-height:24px;font-size:18.67px;color:#202124;white-space:nowrap;right:1441.60px;" class="val">6,015</div>
<div style="position:absolute;top:880.70px;line-height:24px;font-size:18.67px;color:#202124;white-space:nowrap;right:1096.00px;" class="val">639</div>
<div style="position:absolute;top:880.70px;line-height:24px;font-size:18.67px;color:#202124;white-space:nowrap;right:628.50px;" class="val">9.43</div>
<div style="position:absolute;top:880.70px;line-height:24px;font-size:18.67px;color:#202124;white-space:nowrap;right:277.20px;" class="val">$0.00</div>
<div style="position:absolute;left:508px;top:917px;width:2264px;height:1px;background:#dadce0;"></div>
<div style="position:absolute;top:929.58px;line-height:24px;font-size:18.67px;color:#202124;white-space:nowrap;left:540.00px;" class="num">2</div>
<div style="position:absolute;top:929.58px;line-height:24px;font-size:18.67px;color:#1558c0;white-space:nowrap;letter-spacing:0.25px;-webkit-text-stroke:0.3px #1558c0;left:634.00px;" class="lnk"><a>user_engagement</a></div>
<div style="position:absolute;top:929.58px;line-height:24px;font-size:18.67px;color:#202124;white-space:nowrap;right:1441.60px;" class="val">4,897</div>
<div style="position:absolute;top:929.58px;line-height:24px;font-size:18.67px;color:#202124;white-space:nowrap;right:1096.00px;" class="val">586</div>
<div style="position:absolute;top:929.58px;line-height:24px;font-size:18.67px;color:#202124;white-space:nowrap;right:628.50px;" class="val">8.40</div>
<div style="position:absolute;top:929.58px;line-height:24px;font-size:18.67px;color:#202124;white-space:nowrap;right:277.20px;" class="val">$0.00</div>
<div style="position:absolute;left:508px;top:966px;width:2264px;height:49px;background:#f8f9fa;"></div>
<div style="position:absolute;left:508px;top:966px;width:2264px;height:1px;background:#dadce0;"></div>
<div style="position:absolute;top:978.46px;line-height:24px;font-size:18.67px;color:#202124;white-space:nowrap;left:540.00px;" class="num">3</div>
<div style="position:absolute;top:978.46px;line-height:24px;font-size:18.67px;color:#1558c0;white-space:nowrap;letter-spacing:0.766px;-webkit-text-stroke:0.3px #1558c0;left:634.00px;" class="lnk"><a>scroll</a></div>
<div style="position:absolute;top:978.46px;line-height:24px;font-size:18.67px;color:#202124;white-space:nowrap;right:1441.60px;" class="val">2,878</div>
<div style="position:absolute;top:978.46px;line-height:24px;font-size:18.67px;color:#202124;white-space:nowrap;right:1096.00px;" class="val">523</div>
<div style="position:absolute;top:978.46px;line-height:24px;font-size:18.67px;color:#202124;white-space:nowrap;right:628.50px;" class="val">5.50</div>
<div style="position:absolute;top:978.46px;line-height:24px;font-size:18.67px;color:#202124;white-space:nowrap;right:277.20px;" class="val">$0.00</div>
<div style="position:absolute;left:508px;top:1015px;width:2264px;height:1px;background:#dadce0;"></div>
<div style="position:absolute;top:1027.34px;line-height:24px;font-size:18.67px;color:#202124;white-space:nowrap;left:540.00px;" class="num">4</div>
<div style="position:absolute;top:1027.34px;line-height:24px;font-size:18.67px;color:#1558c0;white-space:nowrap;letter-spacing:0.376px;-webkit-text-stroke:0.3px #1558c0;left:634.00px;" class="lnk"><a>view_item_list</a></div>
<div style="position:absolute;top:1027.34px;line-height:24px;font-size:18.67px;color:#202124;white-space:nowrap;right:1441.60px;" class="val">2,462</div>
<div style="position:absolute;top:1027.34px;line-height:24px;font-size:18.67px;color:#202124;white-space:nowrap;right:1096.00px;" class="val">448</div>
<div style="position:absolute;top:1027.34px;line-height:24px;font-size:18.67px;color:#202124;white-space:nowrap;right:628.50px;" class="val">5.50</div>
<div style="position:absolute;top:1027.34px;line-height:24px;font-size:18.67px;color:#202124;white-space:nowrap;right:277.20px;" class="val">$0.00</div>
<div style="position:absolute;left:508px;top:1064px;width:2264px;height:49px;background:#f8f9fa;"></div>
<div style="position:absolute;left:508px;top:1064px;width:2264px;height:1px;background:#dadce0;"></div>
<div style="position:absolute;top:1076.22px;line-height:24px;font-size:18.67px;color:#202124;white-space:nowrap;left:540.00px;" class="num">5</div>
<div style="position:absolute;top:1076.22px;line-height:24px;font-size:18.67px;color:#1558c0;white-space:nowrap;letter-spacing:0.337px;-webkit-text-stroke:0.3px #1558c0;left:634.00px;" class="lnk"><a>view_item</a></div>
<div style="position:absolute;top:1076.22px;line-height:24px;font-size:18.67px;color:#202124;white-space:nowrap;right:1441.60px;" class="val">2,298</div>
<div style="position:absolute;top:1076.22px;line-height:24px;font-size:18.67px;color:#202124;white-space:nowrap;right:1096.00px;" class="val">507</div>
<div style="position:absolute;top:1076.22px;line-height:24px;font-size:18.67px;color:#202124;white-space:nowrap;right:628.50px;" class="val">4.54</div>
<div style="position:absolute;top:1076.22px;line-height:24px;font-size:18.67px;color:#202124;white-space:nowrap;right:277.20px;" class="val">$0.00</div>
<div style="position:absolute;left:508px;top:1113px;width:2264px;height:1px;background:#dadce0;"></div>
<div style="position:absolute;top:1125.10px;line-height:24px;font-size:18.67px;color:#202124;white-space:nowrap;left:540.00px;" class="num">6</div>
<div style="position:absolute;top:1125.10px;line-height:24px;font-size:18.67px;color:#1558c0;white-space:nowrap;letter-spacing:0.5px;-webkit-text-stroke:0.3px #1558c0;left:634.00px;" class="lnk"><a>session_start</a></div>
<div style="position:absolute;top:1125.10px;line-height:24px;font-size:18.67px;color:#202124;white-space:nowrap;right:1441.60px;" class="val">1,145</div>
<div style="position:absolute;top:1125.10px;line-height:24px;font-size:18.67px;color:#202124;white-space:nowrap;right:1096.00px;" class="val">642</div>
<div style="position:absolute;top:1125.10px;line-height:24px;font-size:18.67px;color:#202124;white-space:nowrap;right:628.50px;" class="val">1.79</div>
<div style="position:absolute;top:1125.10px;line-height:24px;font-size:18.67px;color:#202124;white-space:nowrap;right:277.20px;" class="val">$0.00</div>
<div style="position:absolute;left:508px;top:1162px;width:2264px;height:49px;background:#f8f9fa;"></div>
<div style="position:absolute;left:508px;top:1162px;width:2264px;height:1px;background:#dadce0;"></div>
<div style="position:absolute;top:1173.98px;line-height:24px;font-size:18.67px;color:#202124;white-space:nowrap;left:540.00px;" class="num">7</div>
<div style="position:absolute;top:1173.98px;line-height:24px;font-size:18.67px;color:#1558c0;white-space:nowrap;letter-spacing:0.199px;-webkit-text-stroke:0.3px #1558c0;left:634.00px;" class="lnk"><a>add_to_cart</a></div>
<div style="position:absolute;top:1173.98px;line-height:24px;font-size:18.67px;color:#202124;white-space:nowrap;right:1441.60px;" class="val">511</div>
<div style="position:absolute;top:1173.98px;line-height:24px;font-size:18.67px;color:#202124;white-space:nowrap;right:1096.00px;" class="val">127</div>
<div style="position:absolute;top:1173.98px;line-height:24px;font-size:18.67px;color:#202124;white-space:nowrap;right:628.50px;" class="val">4.02</div>
<div style="position:absolute;top:1173.98px;line-height:24px;font-size:18.67px;color:#202124;white-space:nowrap;right:277.20px;" class="val">$0.00</div>
<div style="position:absolute;left:508px;top:1211px;width:2264px;height:1px;background:#dadce0;"></div>
<div style="position:absolute;top:1222.86px;line-height:24px;font-size:18.67px;color:#202124;white-space:nowrap;left:540.00px;" class="num">8</div>
<div style="position:absolute;top:1222.86px;line-height:24px;font-size:18.67px;color:#1558c0;white-space:nowrap;letter-spacing:0.824px;-webkit-text-stroke:0.3px #1558c0;left:634.00px;" class="lnk"><a>click</a></div>
<div style="position:absolute;top:1222.86px;line-height:24px;font-size:18.67px;color:#202124;white-space:nowrap;right:1441.60px;" class="val">361</div>
<div style="position:absolute;top:1222.86px;line-height:24px;font-size:18.67px;color:#202124;white-space:nowrap;right:1096.00px;" class="val">126</div>
<div style="position:absolute;top:1222.86px;line-height:24px;font-size:18.67px;color:#202124;white-space:nowrap;right:628.50px;" class="val">2.87</div>
<div style="position:absolute;top:1222.86px;line-height:24px;font-size:18.67px;color:#202124;white-space:nowrap;right:277.20px;" class="val">$0.00</div>
<div style="position:absolute;left:508px;top:1260px;width:2264px;height:49px;background:#f8f9fa;"></div>
<div style="position:absolute;left:508px;top:1260px;width:2264px;height:1px;background:#dadce0;"></div>
<div style="position:absolute;top:1271.74px;line-height:24px;font-size:18.67px;color:#202124;white-space:nowrap;left:540.00px;" class="num">9</div>
<div style="position:absolute;top:1271.74px;line-height:24px;font-size:18.67px;color:#1558c0;white-space:nowrap;letter-spacing:0.708px;-webkit-text-stroke:0.3px #1558c0;left:634.00px;" class="lnk"><a>first_visit</a></div>
<div style="position:absolute;top:1271.74px;line-height:24px;font-size:18.67px;color:#202124;white-space:nowrap;right:1441.60px;" class="val">357</div>
<div style="position:absolute;top:1271.74px;line-height:24px;font-size:18.67px;color:#202124;white-space:nowrap;right:1096.00px;" class="val">353</div>
<div style="position:absolute;top:1271.74px;line-height:24px;font-size:18.67px;color:#202124;white-space:nowrap;right:628.50px;" class="val">1.01</div>
<div style="position:absolute;top:1271.74px;line-height:24px;font-size:18.67px;color:#202124;white-space:nowrap;right:277.20px;" class="val">$0.00</div>
<div style="position:absolute;left:508px;top:1309px;width:2264px;height:1px;background:#dadce0;"></div>
<div style="position:absolute;top:1320.62px;line-height:24px;font-size:18.67px;color:#202124;white-space:nowrap;left:540.00px;" class="num">10</div>
<div style="position:absolute;top:1320.62px;line-height:24px;font-size:18.67px;color:#1558c0;white-space:nowrap;letter-spacing:0.144px;-webkit-text-stroke:0.3px #1558c0;left:634.00px;" class="lnk"><a>new_recent_active_user</a></div>
<div style="position:absolute;top:1320.62px;line-height:24px;font-size:18.67px;color:#202124;white-space:nowrap;right:1441.60px;" class="val">349</div>
<div style="position:absolute;top:1320.62px;line-height:24px;font-size:18.67px;color:#202124;white-space:nowrap;right:1096.00px;" class="val">348</div>
<div style="position:absolute;top:1320.62px;line-height:24px;font-size:18.67px;color:#202124;white-space:nowrap;right:628.50px;" class="val">1.01</div>
<div style="position:absolute;top:1320.62px;line-height:24px;font-size:18.67px;color:#202124;white-space:nowrap;right:277.20px;" class="val">$0.00</div>
<div style="position:absolute;left:508px;top:1358px;width:2264px;height:1px;background:#dadce0;"></div>
<div style="position:absolute;left:1103px;top:718px;width:1px;height:641px;background:#dadce0;"></div>
<div style="position:absolute;left:2868px;top:107px;width:2px;height:1271.5px;background:linear-gradient(to right,#c2c4c8,#d6d8dc);border-radius:2px 0 0 2px;"></div>
<div style="position:absolute;left:2806.800px;top:1317px;width:54px;height:54px;border-radius:50%;background:#fff;box-shadow:0 1px 3px rgba(60,64,67,.3),0 4px 12px 3px rgba(60,64,67,.15)"></div>
<svg style="left:2816.600px;top:1327.400px" width="32" height="32" viewBox="0 0 24 24"><path fill="#3c4043" d="M20 2H4.010c-1.100 0-2 .9-2 2L2 22l4-4h14c1.100 0 2-.9 2-2V4c0-1.100-.9-2-2-2zm0 14H5.170L4 17.170V4h16v12zm-9-4h2v2h-2zm0-6h2v4h-2z"/></svg>
</div></body></html>
